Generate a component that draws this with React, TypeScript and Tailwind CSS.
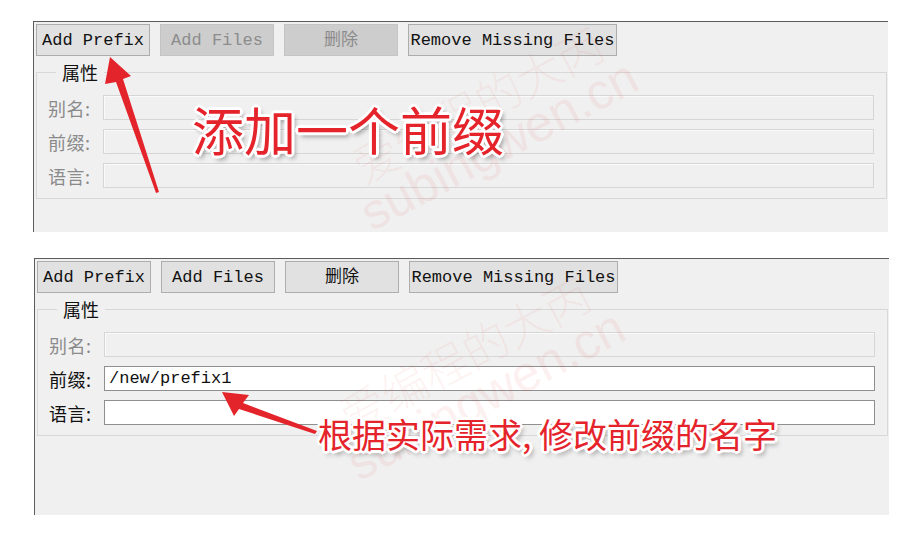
import React from 'react';

const cjk = "font-['Noto_Sans_CJK_SC',sans-serif]";
const mono = "font-['Liberation_Mono','Noto_Sans_CJK_SC',monospace]";

interface ToolButtonProps {
  label: string;
  width: string;
  disabled?: boolean;
}

function ToolButton({ label, width, disabled }: ToolButtonProps) {
  return (
    <button
      type="button"
      className={`${width} h-[32px] ${mono} text-[17px] leading-none ${
        disabled
          ? 'border border-[#c4c4c4] bg-[#cdcdcd] text-[#8c8c8c]'
          : 'border border-[#adadad] bg-[#e1e1e1] text-[#111]'
      }`}
    >
      {label}
    </button>
  );
}

interface FieldRowProps {
  label: string;
  value?: string;
  enabled?: boolean;
  labelDim?: boolean;
}

function FieldRow({ label, value, enabled, labelDim }: FieldRowProps) {
  return (
    <div className="flex h-[25px] items-center">
      <span
        className={`w-[55px] ${cjk} text-[18px] leading-none tracking-[0.5px] ${labelDim ? 'text-[#8a8a8a]' : 'text-[#111]'}`}
      >
        {label}
      </span>
      <div
        className={`flex h-full flex-1 items-center px-[4px] ${mono} text-[17px] text-[#111] ${
          enabled ? 'border border-[#8f8f8f] bg-white' : 'border border-[#d6d6d6] bg-[#f0f0f0] shadow-[inset_1px_1px_0_#fafafa]'
        }`}
      >
        {value}
      </div>
    </div>
  );
}

// faint diagonal site watermark baked into the screenshot
function Watermark({ dx = 0, dy = 0 }: { dx?: number; dy?: number }) {
  return (
    <div className="pointer-events-none absolute inset-0" style={{ transform: `translate(${dx}px, ${dy}px)` }}>
      <span
        className={`absolute left-[305px] top-[58px] -rotate-[28deg] whitespace-nowrap ${cjk} text-[46px] font-light leading-none text-[rgba(225,70,70,0.08)]`}
      >
        爱编程的大丙
      </span>
      <span className="absolute left-[312px] top-[98px] -rotate-[28deg] whitespace-nowrap font-['Liberation_Sans',sans-serif] text-[50px] leading-none text-[rgba(225,70,70,0.08)]">
        subingwen.cn
      </span>
    </div>
  );
}

interface PanelProps {
  height: string;
  enabled: boolean;
  className?: string;
  wmDx?: number;
  wmDy?: number;
}

function Panel({ height, enabled, className = '', wmDx, wmDy }: PanelProps) {
  return (
    <div
      className={`relative w-[855px] ${height} overflow-hidden border-l border-t border-[#5c5c5c] bg-[#f0f0f0] ${className}`}
    >
      <div className="flex gap-[10px] pl-[2px] pt-[2px]">
        <ToolButton label="Add Prefix" width="w-[114px]" />
        <ToolButton label="Add Files" width="w-[114px]" disabled={!enabled} />
        <ToolButton label="删除" width="w-[114px]" disabled={!enabled} />
        <ToolButton label="Remove Missing Files" width="w-[209px]" />
      </div>

      <fieldset className="ml-[2px] mt-[7px] w-[851px] border border-[#d8d8d8] pb-[10px] pl-[11px] pr-[12px] pt-[14px]">
        <legend className={`ml-[8px] px-[6px] ${cjk} text-[18px] leading-[18px] text-[#111]`}>属性</legend>
        <div className="flex flex-col gap-[9px]">
          <FieldRow label="别名:" labelDim />
          <FieldRow label="前缀:" labelDim={!enabled} enabled={enabled} value={enabled ? '/new/prefix1' : undefined} />
          <FieldRow label="语言:" labelDim={!enabled} enabled={enabled} />
        </div>
      </fieldset>

      <Watermark dx={wmDx} dy={wmDy} />
    </div>
  );
}

const outline =
  '[text-shadow:3px_0_0_#fff,-3px_0_0_#fff,0_3px_0_#fff,0_-3px_0_#fff,2px_2px_0_#fff,-2px_-2px_0_#fff,2px_-2px_0_#fff,-2px_2px_0_#fff,3px_4px_5px_rgba(0,0,0,0.45)]';

export default function App() {
  return (
    <div className="relative h-[533px] w-[912px] overflow-hidden bg-white pl-[33px] pt-[21px]">
      <Panel height="h-[211px]" enabled={false} />
      <Panel height="h-[257px]" enabled className="ml-px mt-[26px]" wmDx={-14} wmDy={13} />

      {/* annotations */}
      <div className={`absolute left-[192px] top-[96px] ${cjk} text-[52px] leading-[66px] text-[#e5232a] ${outline}`}>
        添加一个前缀
      </div>
      <div className={`absolute left-[318px] top-[411px] ${cjk} text-[34px] leading-[46px] text-[#e5232a] ${outline}`}>
        根据实际需求, 修改前缀的名字
      </div>

      <svg className="pointer-events-none absolute inset-0" width="912" height="533" viewBox="0 0 912 533">
        <polygon points="110,57 131,76 123,79 159,192 156,193 116,82 105,84" fill="#e4242b" />
        <polygon points="222,392 249,395 243,403 317,431 315,434 239,409 234,416" fill="#e4242b" />
      </svg>
    </div>
  );
}
